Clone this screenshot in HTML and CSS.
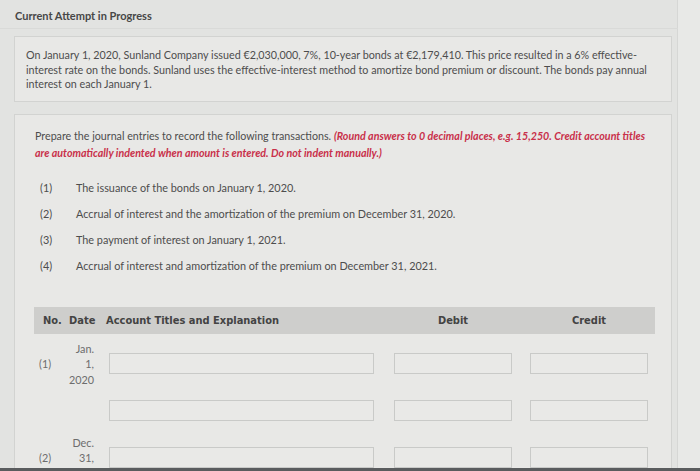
FILE: index.html
```html
<!DOCTYPE html>
<html lang="en">
<head>
<meta charset="utf-8">
<title>Current Attempt in Progress</title>
<link rel="stylesheet" href="styles.css">
</head>
<body>
<div class="screen">
  <div class="page">
    <div class="topbar">Current Attempt in Progress</div>
    <div class="card intro">
      On January 1, 2020, Sunland Company issued €2,030,000, 7%, 10-year bonds at €2,179,410. This price resulted in a 6% effective-interest rate on the bonds. Sunland uses the effective-interest method to amortize bond premium or discount. The bonds pay annual interest on each January 1.
    </div>
    <div class="card task">
      <p class="instr">Prepare the journal entries to record the following transactions. <em class="note">(Round answers to 0 decimal places, e.g. 15,250. Credit account titles are automatically indented when amount is entered. Do not indent manually.)</em></p>
      <ol class="items">
        <li><span class="num">(1)</span><span>The issuance of the bonds on January 1, 2020.</span></li>
        <li><span class="num">(2)</span><span>Accrual of interest and the amortization of the premium on December 31, 2020.</span></li>
        <li><span class="num">(3)</span><span>The payment of interest on January 1, 2021.</span></li>
        <li><span class="num">(4)</span><span>Accrual of interest and amortization of the premium on December 31, 2021.</span></li>
      </ol>
      <div class="journal">
        <div class="jrow jhead">
          <div class="h-no">No.</div>
          <div class="h-date">Date</div>
          <div class="h-acct">Account Titles and Explanation</div>
          <div class="h-amt">Debit</div>
          <div class="h-amt">Credit</div>
        </div>
        <div class="jrow">
          <div class="c-no">(1)</div>
          <div class="c-date">Jan.<br>1,<br>2020</div>
          <div class="c-acct"><span class="field wide"></span></div>
          <div class="c-amt"><span class="field"></span></div>
          <div class="c-amt"><span class="field"></span></div>
        </div>
        <div class="jrow">
          <div class="c-no"></div>
          <div class="c-date"></div>
          <div class="c-acct"><span class="field wide"></span></div>
          <div class="c-amt"><span class="field"></span></div>
          <div class="c-amt"><span class="field"></span></div>
        </div>
        <div class="jrow">
          <div class="c-no">(2)</div>
          <div class="c-date">Dec.<br>31,<br>2020</div>
          <div class="c-acct"><span class="field wide"></span></div>
          <div class="c-amt"><span class="field"></span></div>
          <div class="c-amt"><span class="field"></span></div>
        </div>
      </div>
    </div>
  </div>
  <div class="gutter"></div>
</div>
<div class="bezel"></div>
</body>
</html>
```

FILE: styles.css
```css
html, body {
  margin: 0;
  padding: 0;
}
body {
  width: 700px;
  height: 471px;
  overflow: hidden;
  display: flex;
  flex-direction: column;
  background: #e2e3e1;
  font-family: Lato, "Open Sans", sans-serif;
  color: #4d4d4d;
}
.screen {
  flex: 1;
  display: flex;
  overflow: hidden;
  min-height: 0;
}
.page {
  width: 678px;
  border-right: 1px solid #d6d7d5;
  padding-left: 14px;
  box-sizing: border-box;
}
.gutter {
  flex: 1;
  background: #e8e9e7;
}
.bezel {
  height: 3px;
  background: #5a5c5e;
}
.topbar {
  height: 29px;
  box-sizing: border-box;
  padding: 9px 0 0 15px;
  font-size: 11px;
  font-weight: 700;
  color: #474747;
  border-bottom: 1px solid #d9dad8;
  margin-left: -14px;
  margin-right: -1px;
}
.card {
  width: 658px;
  box-sizing: border-box;
  background: #e8e8e6;
  border: 1px solid #d2d3d1;
}
.intro {
  margin-top: 7px;
  padding: 11px 14px 9px 11px;
  font-size: 10.75px;
  line-height: 14.5px;
}
.task {
  margin-top: 12px;
  padding: 12px 15px 0 20px;
  height: 400px;
}
.instr {
  margin: 0;
  font-size: 10.7px;
  line-height: 17.5px;
}
.note {
  color: #c9304a;
  font-weight: 700;
  font-style: italic;
}
.items {
  list-style: none;
  margin: 19px 0 0 5px;
  padding: 0;
  font-size: 10.85px;
  display: flex;
  flex-direction: column;
  gap: 12.3px;
}
.items li {
  display: flex;
  line-height: 14px;
}
.num {
  width: 36px;
  flex: none;
}
.journal {
  margin-top: 34px;
  width: 621px;
  margin-left: -1px;
}
.jrow {
  display: grid;
  grid-template-columns: 35px 37px 288px 136px 119px;
  align-items: center;
  min-height: 47px;
}
.jhead {
  min-height: 27px;
  background: #cececc;
  font-family: "DejaVu Sans Condensed", "DejaVu Sans", sans-serif;
  font-weight: 700;
  font-size: 11px;
  color: #434343;
  margin-bottom: 6px;
}
.h-no {
  padding-left: 9px;
}
.h-amt {
  width: 118px;
  text-align: center;
}
.c-no, .c-date {
  font-size: 10.8px;
  color: #6d6d6d;
  line-height: 15.5px;
}
.c-no {
  padding-left: 5px;
}
.c-date {
  text-align: right;
  padding-right: 12px;
}
.field {
  display: block;
  width: 118px;
  height: 21px;
  box-sizing: border-box;
  border: 1px solid #c9cac8;
  background: #e9e9e7;
}
.field.wide {
  width: 265px;
  margin-left: 3px;
}
```
